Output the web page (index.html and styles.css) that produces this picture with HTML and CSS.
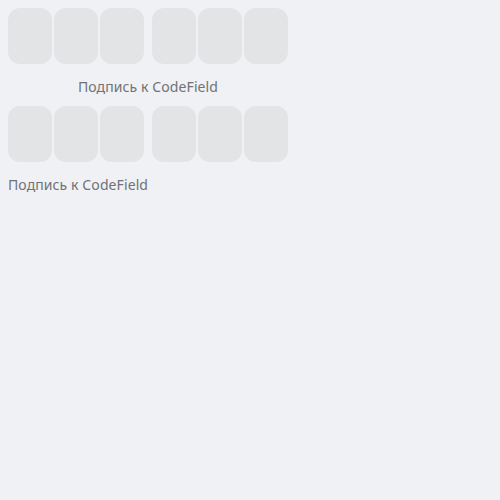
FILE: index.html
```html
<!DOCTYPE html>
<html>
<head>
<meta charset="utf-8">
<link rel="stylesheet" href="styles.css">
</head>
<body>
<div class="field field-center">
  <div class="code">
    <div class="group">
      <div class="cell"></div><div class="cell"></div><div class="cell"></div>
    </div>
    <div class="group">
      <div class="cell"></div><div class="cell"></div><div class="cell"></div>
    </div>
  </div>
  <div class="caption">Подпись к CodeField</div>
</div>
<div class="field">
  <div class="code">
    <div class="group">
      <div class="cell"></div><div class="cell"></div><div class="cell"></div>
    </div>
    <div class="group">
      <div class="cell"></div><div class="cell"></div><div class="cell"></div>
    </div>
  </div>
  <div class="caption">Подпись к CodeField</div>
</div>
</body>
</html>
```
FILE: styles.css
```css
html, body {
  margin: 0;
  background: #f0f1f4;
}
body {
  padding: 8px;
  font-family: "Noto Sans", "Open Sans", sans-serif;
}
.field {
  width: 280px;
  margin-bottom: 9px;
}
.code {
  display: flex;
  gap: 8px;
}
.group {
  display: flex;
  gap: 2px;
}
.cell {
  width: 44px;
  height: 56px;
  border-radius: 12px;
  background: #e3e4e6;
}
.caption {
  margin-top: 13px;
  font-size: 14px;
  line-height: 20px;
  letter-spacing: 0.1px;
  color: #6f7277;
}
.field-center .caption {
  text-align: center;
}
```
